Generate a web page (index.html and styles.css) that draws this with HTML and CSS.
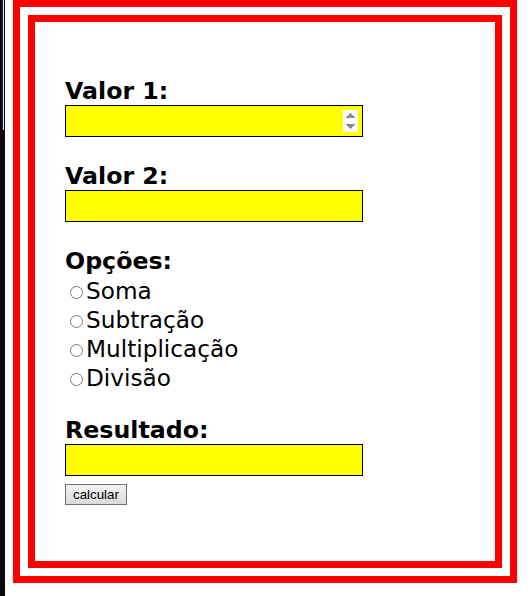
FILE: index.html
```html
<!DOCTYPE html>
<html lang="pt">
<head>
<meta charset="utf-8">
<title>Calculadora</title>
<link rel="stylesheet" href="styles.css">
</head>
<body>
<div class="page">
  <div class="strip"></div>
  <div class="outer">
    <div class="inner">
      <form class="form">
        <div class="field">
          <label class="lbl" for="v1">Valor 1:</label>
          <input class="box num" id="v1" type="number">
        </div>
        <div class="field">
          <label class="lbl" for="v2">Valor 2:</label>
          <input class="box" id="v2" type="text">
        </div>
        <div class="field options">
          <span class="lbl">Opções:</span>
          <div class="opts">
            <label class="opt"><input type="radio" name="op">Soma</label>
            <label class="opt"><input type="radio" name="op">Subtração</label>
            <label class="opt"><input type="radio" name="op">Multiplicação</label>
            <label class="opt"><input type="radio" name="op">Divisão</label>
          </div>
        </div>
        <div class="field last">
          <label class="lbl" for="res">Resultado:</label>
          <input class="box" id="res" type="text">
        </div>
        <div class="actions">
          <button type="button" class="btn">calcular</button>
        </div>
      </form>
    </div>
  </div>
</div>
</body>
</html>
```
FILE: styles.css
```css
html, body {
  margin: 0;
  padding: 0;
  background: #fff;
}
body {
  font-family: "DejaVu Sans", Verdana, sans-serif;
  color: #000;
}
.page {
  display: flex;
  align-items: flex-start;
  gap: 8px;
  height: 596px;
  overflow: hidden;
}
.strip {
  width: 5px;
  height: 596px;
  flex: none;
  background: linear-gradient(to bottom, transparent 0 130px, #0b0b0e 130px),
              linear-gradient(to right, #0b0b0e 0 2px, #1c2448 2px 3px, #dfe3f0 3px 4px, #0b0b0e 4px 5px);
}
.outer {
  box-sizing: border-box;
  width: 504px;
  flex: none;
  border: 7px solid #ff0000;
  padding: 8px;
}
.inner {
  border: 7px solid #ff0000;
  padding: 56px 30px 56px 30px;
}
.form {
  display: flex;
  flex-direction: column;
}
.field {
  display: flex;
  flex-direction: column;
  align-items: flex-start;
  margin-bottom: 26px;
}
.field.options {
  margin-bottom: 25px;
}
.field.last {
  margin-bottom: 8px;
}
.lbl {
  font-size: 23.7px;
  font-weight: bold;
  line-height: 27px;
}
.box {
  box-sizing: border-box;
  width: 298px;
  height: 32px;
  margin: 0;
  border: 1px solid #000;
  background: #ffff00;
  font-size: 16px;
  padding: 0 4px;
}
.num::-webkit-inner-spin-button {
  opacity: 1;
  height: 22px;
}
.opts {
  display: flex;
  flex-direction: column;
  padding-top: 1px;
}
.opt {
  font-size: 23.2px;
  line-height: 29px;
}
.opt input {
  appearance: none;
  -webkit-appearance: none;
  box-sizing: border-box;
  margin: 3px 3px 0 5px;
  width: 13px;
  height: 13px;
  border: 1px solid #7a7a7a;
  border-radius: 50%;
  background: #fff;
  vertical-align: baseline;
}
.actions {
  display: flex;
}
.btn {
  font-family: "Liberation Sans", Arial, sans-serif;
  font-size: 13.333px;
  height: 21px;
  padding: 0 7px;
  border: 1px solid #707070;
  border-radius: 0;
  background: linear-gradient(#f3f3f3, #dadada);
  color: #000;
}
```
